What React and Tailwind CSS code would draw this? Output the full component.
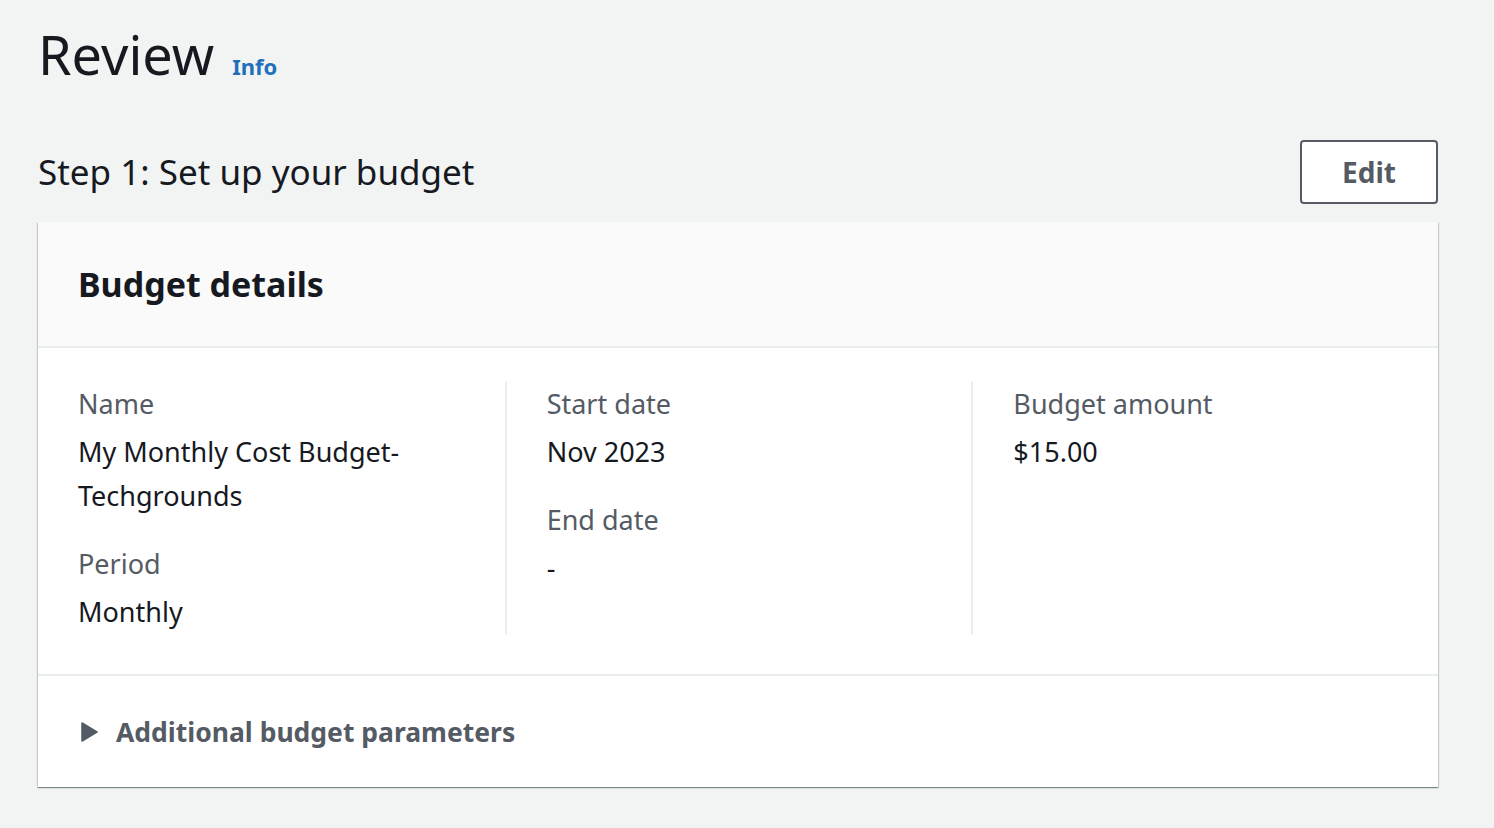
import React from "react";

const font = { fontFamily: '"Noto Sans", "Open Sans", Arial, sans-serif' };

function Field({ label, children }) {
  return (
    <div className="flex flex-col gap-1">
      <div className="text-[27px] leading-[44px] text-[#545b64]">{label}</div>
      <div className="text-[27px] leading-[44px] text-[#16191f]">{children}</div>
    </div>
  );
}

export default function App() {
  return (
    <div className="min-h-[828px] w-[1494px] bg-[#f2f3f3] pl-[38px] pr-[56px] pt-[18px]" style={font}>
      <div className="flex items-baseline gap-[18px]">
        <h1 className="text-[54px] leading-[72px] text-[#16191f]">Review</h1>
        <a className="text-[22px] font-bold text-[#1f70ba]">Info</a>
      </div>
      <div className="mt-[50px] flex items-center justify-between">
        <h2 className="text-[35px] leading-[44px] text-[#16191f]">Step 1: Set up your budget</h2>
        <button className="flex h-[64px] items-center rounded-[4px] border-2 border-[#545b64] bg-white px-[40px] text-[28px] font-bold text-[#545b64]">
          Edit
        </button>
      </div>
      <div className="mt-[18px] bg-white shadow-[0_1px_1px_0_rgba(0,28,36,0.3),1px_1px_1px_0_rgba(0,28,36,0.15),-1px_1px_1px_0_rgba(0,28,36,0.15)]">
        <div className="flex h-[126px] items-center border-b-2 border-[#eaeded] bg-[#fafafa] px-[40px]">
          <h2 className="text-[34px] font-bold leading-[44px] text-[#16191f]">Budget details</h2>
        </div>
        <div className="border-b-2 border-[#eaeded] pb-[40px] pt-[34px]">
          <div className="grid grid-cols-3">
            <div className="flex flex-col gap-6 pl-[40px] pr-[40px]">
              <Field label="Name">
                My Monthly Cost Budget-
                <br />
                Techgrounds
              </Field>
              <Field label="Period">Monthly</Field>
            </div>
            <div className="flex flex-col gap-6 border-l-2 border-[#eaeded] pl-[40px] pr-[40px]">
              <Field label="Start date">Nov 2023</Field>
              <Field label="End date">-</Field>
            </div>
            <div className="flex flex-col gap-6 border-l-2 border-[#eaeded] pl-[40px] pr-[40px]">
              <Field label="Budget amount">$15.00</Field>
            </div>
          </div>
        </div>
        <div className="flex h-[111px] items-center gap-[18px] px-[43px] text-[#545b64]">
          <svg width="17" height="20" viewBox="0 0 17 20">
            <path d="M1 1 L16 10 L1 19 Z" fill="#545b64" stroke="#545b64" strokeWidth="1.5" strokeLinejoin="round" />
          </svg>
          <span className="text-[26.5px] font-bold leading-[44px]">Additional budget parameters</span>
        </div>
      </div>
    </div>
  );
}
